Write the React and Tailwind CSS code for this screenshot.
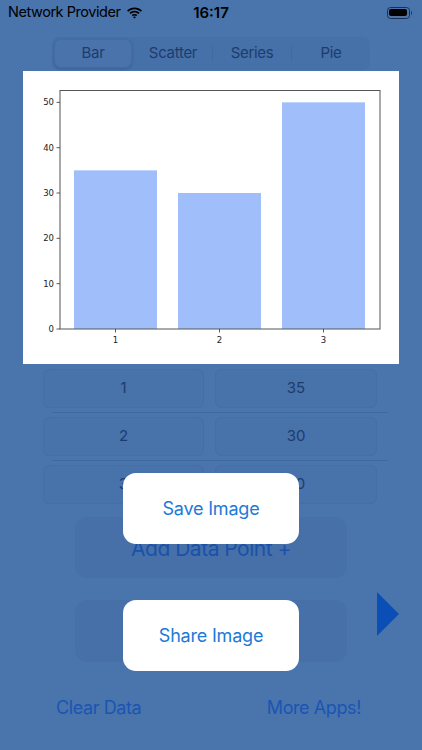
import React from "react";

function Chart() {
  const y0 = 258;
  const unit = 4.533;
  const bars = [
    { x: 51, v: 35, label: "1" },
    { x: 155, v: 30, label: "2" },
    { x: 259, v: 50, label: "3" },
  ];
  const ticks = [0, 10, 20, 30, 40, 50];
  return (
    <svg width="376" height="293" viewBox="0 0 376 293" className="block">
      <rect x="0" y="0" width="376" height="293" fill="#ffffff" />
      {bars.map((b) => (
        <rect
          key={b.label}
          x={b.x}
          y={y0 - b.v * unit}
          width={83}
          height={b.v * unit}
          fill="#a0bffa"
        />
      ))}
      <rect x="37" y="19.5" width="320" height="238.5" fill="none" stroke="#555" strokeWidth="1" />
      {ticks.map((t) => {
        const y = y0 - t * unit;
        return (
          <g key={t}>
            <line x1="33.5" x2="37" y1={y} y2={y} stroke="#333" strokeWidth="0.8" />
            <text
              x="31"
              y={y + 3}
              textAnchor="end"
              fontSize="8.5"
              fill="#222"
              fontFamily="'DejaVu Sans', sans-serif"
            >
              {t}
            </text>
          </g>
        );
      })}
      {bars.map((b) => (
        <g key={"l" + b.label}>
          <line x1={b.x + 41.5} x2={b.x + 41.5} y1={y0} y2={y0 + 3.5} stroke="#333" strokeWidth="0.8" />
          <text
            x={b.x + 41.5}
            y={y0 + 13.5}
            textAnchor="middle"
            fontSize="8.5"
            fill="#222"
            fontFamily="'DejaVu Sans', sans-serif"
          >
            {b.label}
          </text>
        </g>
      ))}
    </svg>
  );
}

function Wifi() {
  return (
    <svg width="17" height="12" viewBox="0 0 17 12" className="block">
      <path d="M8.5 2.2c2.4 0 4.6.9 6.3 2.5l1.2-1.2C14 1.6 11.4.5 8.5.5S3 1.6 1 3.5l1.2 1.2C3.9 3.1 6.1 2.2 8.5 2.2z" fill="#000" />
      <path d="M8.5 5.4c1.5 0 2.9.6 3.9 1.5l1.2-1.2C12.3 4.5 10.5 3.7 8.5 3.7S4.7 4.5 3.4 5.7l1.2 1.2c1-.9 2.4-1.5 3.9-1.5z" fill="#000" />
      <path d="M8.5 8.6c.7 0 1.2.2 1.6.6l1.2-1.2c-.7-.7-1.7-1.1-2.8-1.1s-2.1.4-2.8 1.1l1.2 1.2c.4-.4.9-.6 1.6-.6zM8.5 11.6l1.5-1.5c-.4-.4-.9-.6-1.5-.6s-1.1.2-1.5.6z" fill="#000" />
    </svg>
  );
}

function Battery() {
  return (
    <div className="flex items-center">
      <div className="w-[23px] h-[12px] rounded-[3.5px] border border-[#1f2f4a] p-[1.5px]">
        <div className="w-full h-full rounded-[2px] bg-black" />
      </div>
      <div className="w-[1.5px] h-[4px] rounded-r-sm bg-[#2a3c5c] ml-[1px]" />
    </div>
  );
}

export default function App() {
  const rows = [
    ["1", "35"],
    ["2", "30"],
    ["3", "50"],
  ];
  const font = { fontFamily: "Inter, 'Noto Sans', sans-serif" };
  const seg = "text-[15px] tracking-[-0.3px] text-[#1d3c6e]";
  return (
    <div className="relative w-[422px] h-[750px] overflow-hidden bg-[#4a74ac]" style={font}>
      {/* status bar */}
      <div className="h-[25px] flex items-center px-[8px] relative">
        <div className="flex items-center gap-[5px]">
          <span className="text-[14.5px] text-black leading-none tracking-[-0.45px]">Network Provider</span>
          <Wifi />
        </div>
        <div className="absolute left-0 right-0 top-0 h-[25px] flex items-center justify-center pointer-events-none">
          <span className="text-[15px] font-semibold text-black leading-none">16:17</span>
        </div>
        <div className="ml-auto mr-[2px]">
          <Battery />
        </div>
      </div>

      {/* segmented control */}
      <div className="mt-[12px] ml-[52px] w-[318px] h-[33px] rounded-[8px] bg-[#4670a8] py-[2px] flex items-stretch">
        <div className="flex-1 flex px-[2px]">
          <div className={"flex-1 rounded-[7px] bg-[#4a73ab] border border-[#436ca3] shadow-[0_1px_3px_rgba(30,50,90,0.25)] flex items-center justify-center " + seg}>
            Bar
          </div>
        </div>
        <div className={"flex-1 flex items-center justify-center " + seg}>Scatter</div>
        <div className="w-px my-[7px] bg-[#42699f]" />
        <div className={"flex-1 flex items-center justify-center " + seg}>Series</div>
        <div className="w-px my-[7px] bg-[#42699f]" />
        <div className={"flex-1 flex items-center justify-center " + seg}>Pie</div>
      </div>

      {/* chart */}
      <div className="mt-[1px] ml-[23px] w-[376px] h-[293px] bg-white">
        <Chart />
      </div>

      {/* data rows */}
      <div className="mt-[5px] flex flex-col">
        {rows.map((r, i) => (
          <div key={i} className="flex flex-col">
            <div className="ml-[43px] flex gap-[11px]">
              <div className="w-[161px] h-[39px] rounded-[6px] bg-[#4872aa] border border-[#456ea5] flex items-center justify-center text-[15px] text-[#1d3c6e]">
                {r[0]}
              </div>
              <div className="w-[162px] h-[39px] rounded-[6px] bg-[#4872aa] border border-[#456ea5] flex items-center justify-center text-[15px] text-[#1d3c6e]">
                {r[1]}
              </div>
            </div>
            {i < 2 && <div className="ml-[52px] w-[336px] h-px bg-[#4169a0] mt-[4px] mb-[4px]" />}
          </div>
        ))}
      </div>

      {/* add data point */}
      <div className="mt-[13px] ml-[75px] w-[272px] h-[61px] rounded-[12px] bg-[#4770a8] flex items-center justify-center text-[21px] tracking-[-0.5px] text-[#1a52aa]">
        <span className="mt-[3px]">Add Data Point +</span>
      </div>

      {/* second row */}
      <div className="mt-[14px] flex items-start">
        <div className="mt-[8px] ml-[75px] w-[272px] h-[62px] rounded-[12px] bg-[#4770a8]" />
        <svg width="22" height="44" viewBox="0 0 22 44" className="ml-[30px] block">
          <path d="M0 0 L22 22 L0 44 Z" fill="#0b4fb6" />
        </svg>
      </div>

      {/* bottom links */}
      <div className="mt-[32px] flex">
        <span className="ml-[56px] text-[18px] tracking-[-0.4px] text-[#1a55b3]">Clear Data</span>
        <span className="ml-auto mr-[61px] text-[18px] tracking-[-0.4px] text-[#1a55b3]">More Apps!</span>
      </div>

      {/* popups */}
      <div className="absolute left-[123px] top-[473px] w-[176px] h-[71px] rounded-[13px] bg-white flex items-center justify-center text-[18px] tracking-[-0.2px] text-[#1c7ad9]">
        Save Image
      </div>
      <div className="absolute left-[123px] top-[600px] w-[176px] h-[71px] rounded-[13px] bg-white flex items-center justify-center text-[18px] tracking-[-0.2px] text-[#1c7ad9]">
        Share Image
      </div>
    </div>
  );
}
